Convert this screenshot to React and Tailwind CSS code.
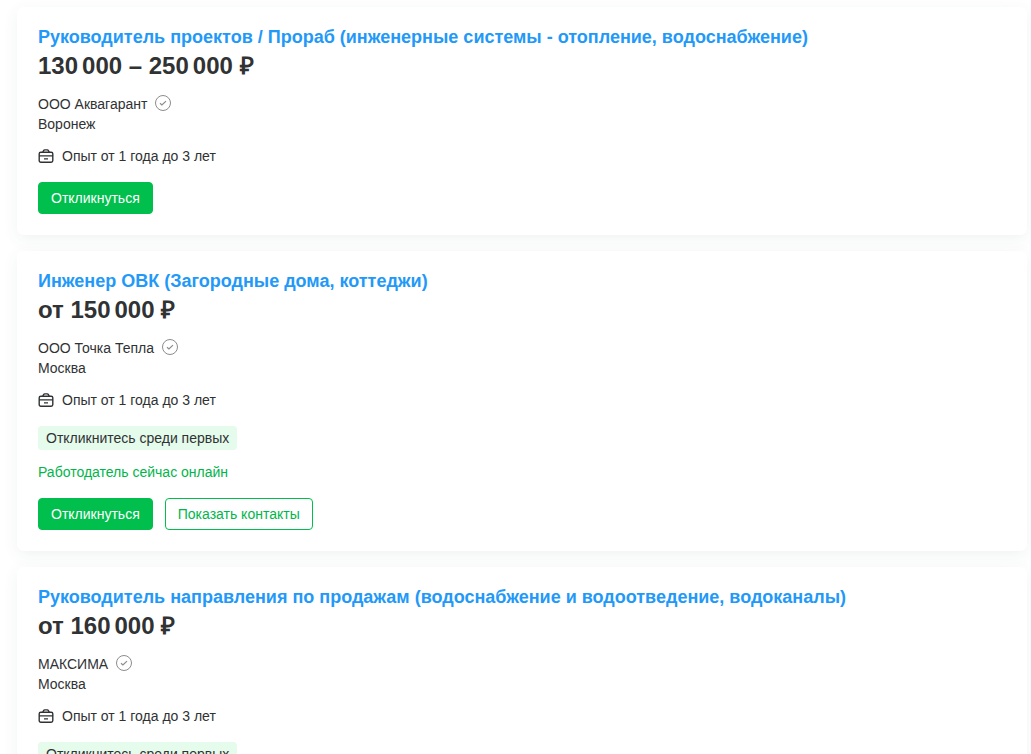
import clsx from "clsx";

const vacancies = [
    {
        id: 1,
        title: "Руководитель проектов / Прораб (инженерные системы - отопление, водоснабжение)",
        salary: "130\u2006000 – 250\u2006000 ₽",
        company: "ООО Аквагарант",
        city: "Воронеж",
        experience: "Опыт от 1 года до 3 лет",
    },
    {
        id: 2,
        title: "Инженер ОВК (Загородные дома, коттеджи)",
        salary: "от 150\u2006000 ₽",
        company: "ООО Точка Тепла",
        city: "Москва",
        experience: "Опыт от 1 года до 3 лет",
        fewResponses: true,
        online: true,
        contacts: true,
    },
    {
        id: 3,
        title: "Руководитель направления по продажам (водоснабжение и водоотведение, водоканалы)",
        salary: "от 160\u2006000 ₽",
        company: "МАКСИМА",
        city: "Москва",
        experience: "Опыт от 1 года до 3 лет",
        fewResponses: true,
    },
];

const VerifiedIcon = () => (
    <svg className="size-4 mb-0.5" viewBox="0 0 16 16" fill="none" stroke="#8c8c8c" aria-hidden="true">
        <circle cx="8" cy="8" r="7.5" />
        <path d="M5 8.3l1.9 1.7 4.1-3.9" strokeWidth="1.2" />
    </svg>
);

const BriefcaseIcon = () => (
    <svg className="size-4" viewBox="0 0 16 16" fill="none" stroke="#303233" strokeWidth="1.4" aria-hidden="true">
        <rect x="1.2" y="4.2" width="13.6" height="10" rx="1.6" />
        <path d="M4.8 4.2L5.6 2.6c.2-.4.6-.7 1.1-.7h2.6c.5 0 .9.3 1.1.7l.8 1.6" />
        <path d="M1 7.9h14M6 10.9h4" />
    </svg>
);

const Button = ({ outlined, children }) => (
    <button
        type="button"
        className={clsx(
            "h-8 px-3 rounded-sm border border-[#00bf4d] text-sm cursor-pointer",
            outlined ? "bg-white text-[#00b54a] hover:bg-[#e5fbeb]" : "bg-[#00bf4d] text-white font-medium hover:bg-[#00a843]"
        )}
    >
        {children}
    </button>
);

const VacancyCard = ({ vacancy }) => {
    const { title, salary, company, city, experience, fewResponses, online, contacts } = vacancy;

    return (
        <article className="p-5 rounded-md border border-white bg-white shadow-[0_4px_16px_rgba(48,80,70,0.07)]">
            <h2 className="text-lg leading-[18px] font-bold text-[#2299f8]">
                <a href="#vacancy">{title}</a>
            </h2>
            <p className="mt-1.5 text-2xl leading-7 font-bold">{salary}</p>

            <div className="mt-3.5 flex items-center gap-2">
                <a href="#company">{company}</a>
                <VerifiedIcon />
            </div>
            <p>{city}</p>

            <div className="mt-3 flex items-center gap-2">
                <BriefcaseIcon />
                <span>{experience}</span>
            </div>

            {fewResponses && (
                <div className="mt-4 flex">
                    <span className="px-2 py-0.5 rounded-sm bg-[#e5fbeb]">Откликнитесь среди первых</span>
                </div>
            )}
            {online && <p className="mt-3 text-[#00b54a]">Работодатель сейчас онлайн</p>}

            <div className="mt-4 flex flex-wrap gap-3">
                <Button>Откликнуться</Button>
                {contacts && <Button outlined>Показать контакты</Button>}
            </div>
        </article>
    );
};

const App = () => {
    return (
        <main className="flex flex-col gap-4 pt-[7px] pb-4 pl-[17px] pr-1 bg-white font-['Liberation_Sans',Arial,sans-serif] text-sm leading-5 text-[#303233]">
            {vacancies.map((vacancy) => (
                <VacancyCard key={vacancy.id} vacancy={vacancy} />
            ))}
        </main>
    );
};

export default App;
